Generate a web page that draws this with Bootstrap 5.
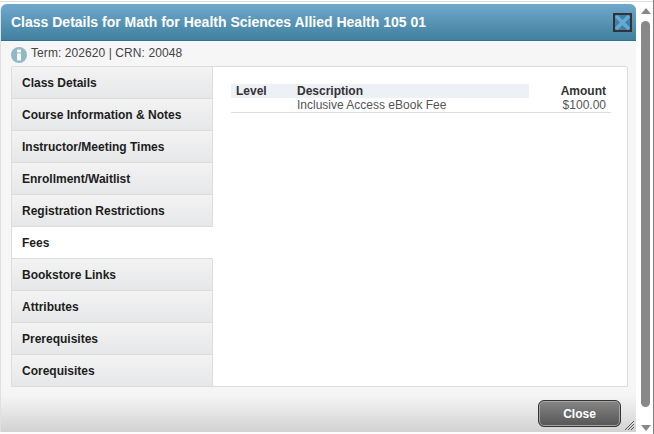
<!DOCTYPE html>
<html lang="en">
<head>
  <meta charset="UTF-8" />
  <title>Class Details</title>
  <link rel="stylesheet" href="https://cdn.jsdelivr.net/npm/bootstrap@5.3.2/dist/css/bootstrap.min.css"/>
  <style>
    html, body { height: 434px; overflow: hidden; }
    body { font-family: "Liberation Sans", Arial, sans-serif; font-size: 12px; background: #fff; color: #444; }
    .page-wrap { height: 434px; padding-top: 1px; border-right: 1px solid #808080; }
    .top-line { height: 1px; background: #ddd; margin-bottom: 2px; }
    .dlg { width: 635px; height: 428px; margin-left: 1px; background: #f6f6f6; border-radius: 6px 6px 0 0; box-shadow: -1px 0 1px #ddd; position: relative; }
    .dlg-head { height: 37px; background: linear-gradient(#6fa8cb, #41809f); border-bottom: 1px solid #33708f; border-radius: 6px 6px 0 0; padding: 0 4px 0 10px; }
    .dlg-title { color: #fff; font-weight: 700; font-size: 14px; }
    .close-x { width: 19px; height: 19px; border: 2px solid #333; background: #3d80ac; margin-top: 1px; }
    .term-row { height: 25px; padding: 0 0 2px 10px; color: #444; font-size: 12px; letter-spacing: .08px; }
    .info-ico { width: 16px; height: 16px; margin-right: 4px; margin-top: 4px; }
    .dlg-main { margin: 0 8px 0 10px; height: 321px; background: #fff; border: 1px solid #ddd; border-radius: 2px 2px 0 0; }
    .tab-col { width: 201px; flex: none; }
    .tab-item { height: 32px; padding: 1px 10px 0; font-weight: 700; color: #1d1d1d; background: linear-gradient(#f3f3f3, #e6e7e8); border-bottom: 1px solid #dcdcdc; border-right: 1px solid #ddd; }
    .tab-item.sel { background: #fff; border-right-color: #fff; }
    .fee-area { padding: 17px 16px 0 18px; }
    .fee-head { height: 14px; line-height: 14px; font-weight: 700; color: #333; }
    .fee-line { height: 15px; line-height: 15px; color: #555; border-bottom: 1px solid #ddd; }
    .c-lvl { width: 66px; padding-left: 5px; }
    .c-desc { width: 232px; }
    .c-amt { width: 81px; text-align: right; padding-right: 5px; }
    .head-band { background: #edf0f4; width: 298px; }
    .dlg-foot { height: 45px; background: linear-gradient(#f6f6f6 0, #f4f4f4 20%, #d2d2d2 100%); padding: 0 15px 0 0; }
    .close-btn { width: 83px; height: 27px; padding: 0; margin-top: 13px; border: 1px solid #333; border-radius: 6px; background: linear-gradient(#858585, #565656); box-shadow: inset 0 0 0 1px #a5a5a5; color: #fff; font-size: 12px; font-weight: 700; }
    .grip { position: absolute; right: 2px; bottom: 2px; width: 9px; height: 9px; }
    .scroll-col { width: 11px; margin-left: 4px; height: 428px; }
    .sc-up { width: 0; height: 0; border-left: 5px solid transparent; border-right: 5px solid transparent; border-bottom: 6px solid #888; margin: 4px auto 7px; }
    .sc-down { width: 0; height: 0; border-left: 5px solid transparent; border-right: 5px solid transparent; border-top: 6px solid #888; margin: 18px auto 1px; }
    .sc-thumb { flex: 1; width: 9px; margin: 0 auto; background: #888; border-radius: 5px; }
  </style>
</head>
<body>
<div class="page-wrap">
  <div class="top-line"></div>
  <div class="d-flex">
    <div class="dlg">
      <div class="dlg-head d-flex align-items-center justify-content-between">
        <span class="dlg-title">Class Details for Math for Health Sciences Allied Health 105 01</span>
        <span class="close-x d-block">
          <svg width="15" height="15" viewBox="0 0 15 15" class="d-block"><path d="M1 1L14 14M14 1L1 14" stroke="#66a9d2" stroke-width="3.6" fill="none"/></svg>
        </span>
      </div>
      <div class="term-row d-flex align-items-center">
        <svg class="info-ico" viewBox="0 0 16 16"><circle cx="8" cy="8" r="8" fill="#8fb9c4"/><rect x="6" y="2.5" width="4" height="3" fill="#f4f8f9"/><rect x="6" y="6.5" width="4" height="7" fill="#f4f8f9"/></svg>
        <span>Term: 202620 | CRN: 20048</span>
      </div>
      <div class="dlg-main d-flex">
        <div class="tab-col">
          <div class="tab-item d-flex align-items-center">Class Details</div>
          <div class="tab-item d-flex align-items-center">Course Information &amp; Notes</div>
          <div class="tab-item d-flex align-items-center">Instructor/Meeting Times</div>
          <div class="tab-item d-flex align-items-center">Enrollment/Waitlist</div>
          <div class="tab-item d-flex align-items-center">Registration Restrictions</div>
          <div class="tab-item sel d-flex align-items-center">Fees</div>
          <div class="tab-item d-flex align-items-center">Bookstore Links</div>
          <div class="tab-item d-flex align-items-center">Attributes</div>
          <div class="tab-item d-flex align-items-center">Prerequisites</div>
          <div class="tab-item d-flex align-items-center">Corequisites</div>
        </div>
        <div class="fee-area flex-grow-1">
          <div class="fee-head d-flex">
            <div class="head-band d-flex"><div class="c-lvl">Level</div><div class="c-desc">Description</div></div>
            <div class="c-amt ms-auto">Amount</div>
          </div>
          <div class="fee-line d-flex">
            <div class="c-lvl"></div><div class="c-desc">Inclusive Access eBook Fee</div>
            <div class="c-amt ms-auto">$100.00</div>
          </div>
        </div>
      </div>
      <div class="dlg-foot d-flex justify-content-end">
        <button type="button" class="btn close-btn">Close</button>
      </div>
      <svg class="grip" viewBox="0 0 9 9"><path d="M0 9L9 0M3 9L9 3M6 9L9 6" stroke="#555" stroke-width="1"/></svg>
    </div>
    <div class="scroll-col d-flex flex-column">
      <div class="sc-up"></div>
      <div class="sc-thumb"></div>
      <div class="sc-down"></div>
    </div>
  </div>
</div>
<script src="https://cdn.jsdelivr.net/npm/bootstrap@5.3.2/dist/js/bootstrap.bundle.min.js"></script>
</body>
</html>
